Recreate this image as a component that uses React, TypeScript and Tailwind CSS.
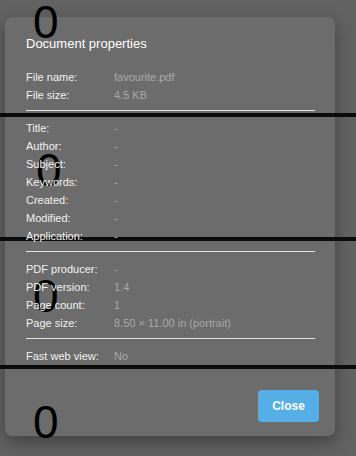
const FONT = { fontFamily: '"Liberation Sans", Arial, sans-serif' }

type Row = readonly [string, string]

const GROUPS: readonly (readonly Row[])[] = [
  [
    ['File name:', 'favourite.pdf'],
    ['File size:', '4.5 KB'],
  ],
  [
    ['Title:', '-'],
    ['Author:', '-'],
    ['Subject:', '-'],
    ['Keywords:', '-'],
    ['Created:', '-'],
    ['Modified:', '-'],
    ['Application:', '-'],
  ],
  [
    ['PDF producer:', '-'],
    ['PDF version:', '1.4'],
    ['Page count:', '1'],
    ['Page size:', '8.50 × 11.00 in (portrait)'],
  ],
  [['Fast web view:', 'No']],
]

function PropRow({ label, value }: { label: string; value: string }) {
  return (
    <div className="flex h-[18px] items-center text-[11px] leading-[18px]">
      <span className="w-[88px] shrink-0 text-[#f2f2f2]">{label}</span>
      <span className="text-[#a9a9a9]">{value}</span>
    </div>
  )
}

export default function App() {
  return (
    <div
      className="relative h-[456px] w-[356px] overflow-hidden bg-[#626262] pt-[17px] pl-[5px]"
      style={FONT}
    >
      {/* stray content from the page behind, drawn over the panel */}
      <div className="pointer-events-none absolute inset-0 z-10">
        <span className="absolute left-[33px] top-[-4px] text-[46px] leading-[52px] text-black">0</span>
        <span className="absolute left-[36px] top-[144px] text-[46px] leading-[52px] text-black">0</span>
        <span className="absolute left-[33px] top-[270px] text-[46px] leading-[52px] text-black">0</span>
        <span className="absolute left-[33px] top-[396px] text-[46px] leading-[52px] text-black">0</span>
        <div className="absolute left-0 right-0 top-[113px] h-[4px] bg-[#0b0b0b]" />
        <div className="absolute left-0 right-0 top-[237px] h-[4px] bg-[#0b0b0b]" />
        <div className="absolute left-0 right-0 top-[365px] h-[4px] bg-[#0b0b0b]" />
      </div>

      <div className="h-[419px] w-[330px] rounded-[7px] bg-[#6c6c6c] shadow-[0_6px_18px_rgba(0,0,0,0.35)]">
        <div className="relative z-20 flex flex-col pt-[15px] pl-[21px] pr-[20px]">
          <h2 className="h-[24px] text-[13px] leading-[24px] text-white">Document properties</h2>
          <div className="mt-[12px] flex flex-col">
            {GROUPS.map((rows, i) => (
              <div key={i} className="flex flex-col">
                {i > 0 && <div className="mt-[6px] mb-[8px] h-px bg-[#e4e4e4]" />}
                {rows.map(([label, value]) => (
                  <PropRow key={label} label={label} value={value} />
                ))}
              </div>
            ))}
          </div>
          <div className="mt-[25px] mr-[-4px] flex justify-end">
            <button
              type="button"
              className="h-[32px] w-[61px] rounded-[4px] bg-[#55aee6] text-[12px] font-bold text-white"
            >
              Close
            </button>
          </div>
        </div>
      </div>
    </div>
  )
}
